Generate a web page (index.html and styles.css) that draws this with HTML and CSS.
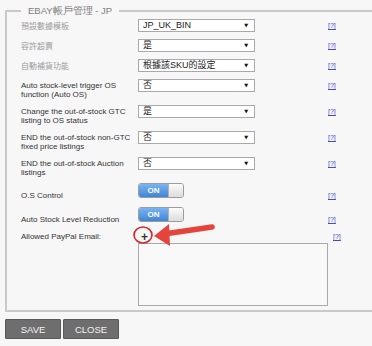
FILE: index.html
```html
<!DOCTYPE html>
<html lang="zh-Hant">
<head>
    <meta charset="UTF-8">
    <meta name="viewport" content="width=device-width, initial-scale=1.0">
    <title>EBAY帳戶管理 - JP</title>
    <link rel="stylesheet" href="styles.css">
</head>
<body>

    <fieldset class="panel">
        <legend>EBAY帳戶管理 - JP</legend>

        <div class="row">
            <label class="label zh">預設數據模板</label>
            <div class="select">JP_UK_BIN</div>
            <a class="help">[?]</a>
        </div>
        <div class="row">
            <label class="label zh">容許超賣</label>
            <div class="select">是</div>
            <a class="help">[?]</a>
        </div>
        <div class="row">
            <label class="label zh">自動補貨功能</label>
            <div class="select">根據該SKU的設定</div>
            <a class="help">[?]</a>
        </div>

        <div class="row two">
            <label class="label">Auto stock-level trigger OS function (Auto OS)</label>
            <div class="select">否</div>
            <a class="help">[?]</a>
        </div>
        <div class="row two">
            <label class="label">Change the out-of-stock GTC listing to OS status</label>
            <div class="select">是</div>
            <a class="help">[?]</a>
        </div>
        <div class="row two">
            <label class="label">END the out-of-stock non-GTC fixed price listings</label>
            <div class="select">否</div>
            <a class="help">[?]</a>
        </div>
        <div class="row two">
            <label class="label">END the out-of-stock Auction listings</label>
            <div class="select">否</div>
            <a class="help">[?]</a>
        </div>

        <div class="row switch">
            <label class="label">O.S Control</label>
            <div class="toggle"><span class="on">ON</span><span class="off"></span></div>
            <a class="help">[?]</a>
        </div>
        <div class="row switch">
            <label class="label">Auto Stock Level Reduction</label>
            <div class="toggle"><span class="on">ON</span><span class="off"></span></div>
            <a class="help">[?]</a>
        </div>

        <div class="row paypal">
            <label class="label">Allowed PayPal Email:</label>
            <div class="add-cell">
                <span class="add">+</span>
                <!-- red annotation pointing at the add button -->
                <svg class="callout" width="90" height="32" viewBox="0 0 90 32">
                    <ellipse cx="13" cy="14" rx="9" ry="8" fill="none" stroke="#d4262a" stroke-width="1.6"/>
                    <line x1="34" y1="13" x2="82" y2="6" stroke="#e5443c" stroke-width="5.5" stroke-linecap="round"/>
                    <polygon points="24,15 39,3 40,25" fill="#e5443c"/>
                </svg>
            </div>
            <a class="help">[?]</a>
        </div>

        <div class="memo-row">
            <textarea class="memo"></textarea>
        </div>
    </fieldset>

    <div class="actions">
        <button>SAVE</button>
        <button>CLOSE</button>
    </div>

</body>
</html>
```

FILE: styles.css
```css
* {
    box-sizing: border-box;
}

body {
    margin: 0;
    background-color: #f7f7f7;
    font-family: "Liberation Sans", Arial, sans-serif;
    font-size: 8px;
    color: #333;
    overflow: hidden;
}

.panel {
    margin: 4px 0 0 5px;
    padding: 1px 0 4px 14px;
    border: 2px solid #c9c9c9;
    border-right: none;
    min-width: 0;
}

.panel legend {
    padding: 0 7px;
    font-size: 9.5px;
    line-height: 14px;
    color: #7d7d7d;
}

.row {
    display: grid;
    grid-template-columns: 117px 190px 20px;
    align-items: start;
    height: 20px;
}

.row.two {
    height: 26px;
}

.row.switch {
    height: 24px;
}

.label {
    line-height: 9px;
    margin-top: 2px;
}

.label.zh {
    font-family: "Noto Sans CJK TC", "Liberation Sans", sans-serif;
    color: #9c9c9c;
    margin-top: 1px;
    line-height: 11px;
}

.select {
    position: relative;
    width: 117px;
    height: 13px;
    padding-left: 4px;
    border: 1px solid #a9a9a9;
    background-color: #fff;
    font-family: "Liberation Sans", "Noto Sans CJK TC", sans-serif;
    font-size: 9px;
    line-height: 11px;
    color: #222;
}

.select::after {
    content: "▼";
    position: absolute;
    right: 6px;
    top: 0;
    font-family: "DejaVu Sans", sans-serif;
    font-size: 5px;
    line-height: 11px;
    color: #111;
}

.help {
    font-size: 7px;
    line-height: 13px;
    color: #4848cc;
    text-decoration: underline;
}

.switch .label {
    margin-top: 8px;
}

.switch .help {
    margin-top: 6px;
}

.toggle {
    display: flex;
    width: 46px;
    height: 15px;
    border: 1px solid #9c9c9c;
    border-radius: 3px;
    overflow: hidden;
}

.toggle .on {
    width: 29px;
    background: linear-gradient(#7ab3f0, #3f86d8);
    color: #fff;
    font-weight: bold;
    font-size: 8px;
    line-height: 13px;
    text-align: center;
}

.toggle .off {
    flex: 1;
    border-left: 1px solid #b0b0b0;
    background: linear-gradient(#fbfbfb, #dcdcdc);
}

.row.paypal {
    height: 12px;
}

.paypal .label,
.paypal .help {
    margin-top: 0;
    line-height: 12px;
}

.paypal .help {
    margin-left: 5px;
}

.add-cell {
    position: relative;
    height: 12px;
}

.add {
    display: inline-block;
    margin-left: 3px;
    font-weight: bold;
    font-size: 12px;
    line-height: 13px;
    color: #2a3a2a;
}

.callout {
    position: absolute;
    left: -8px;
    top: -10px;
    pointer-events: none;
}

.memo-row {
    display: grid;
    grid-template-columns: 117px 190px;
}

.memo {
    grid-column: 2;
    width: 190px;
    height: 63px;
    margin: 0;
    border: 1px solid #a9a9a9;
    background-color: #f9f9f9;
    resize: none;
}

.actions {
    display: flex;
    gap: 2px;
    margin: 7px 0 0 5px;
}

.actions button {
    width: 56px;
    height: 20px;
    padding: 0;
    background-color: #6e6e6e;
    border: 1px solid #595959;
    border-radius: 1px;
    color: #f2f2f2;
    font-family: "Liberation Sans", Arial, sans-serif;
    font-size: 9.5px;
}
```
